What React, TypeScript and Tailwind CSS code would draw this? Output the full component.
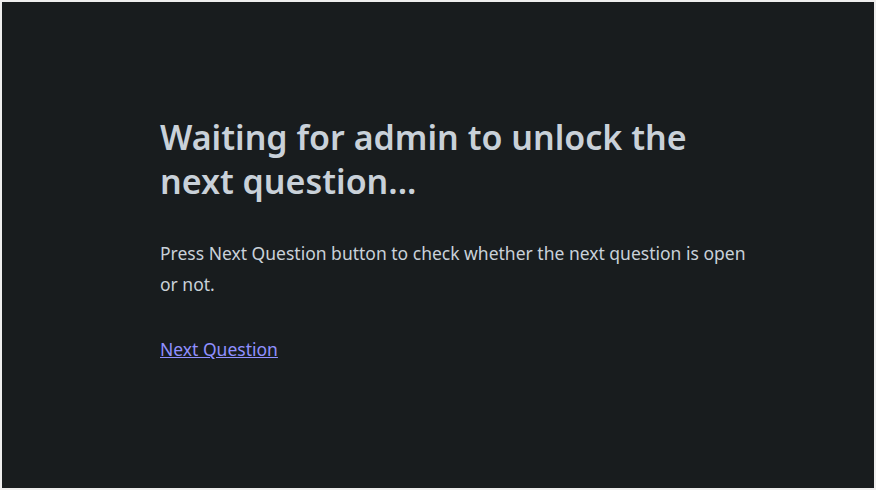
export default function App() {
  return (
    <div
      className="w-[876px] h-[490px] bg-[#181c1e] border-2 border-[#eeeeee] pl-[158px] pt-[113px]"
      style={{ fontFamily: '"Noto Sans", "Open Sans", sans-serif' }}
    >
      <div className="w-[596px]">
        <h1 className="text-[34px] leading-[44px] font-semibold text-[#c9d1d9]">
          Waiting for admin to unlock the next question...
        </h1>
        <p className="mt-[35px] text-[17.5px] leading-[31px] text-[#c9d1d9]">
          Press Next Question button to check whether the next question is open or not.
        </p>
        <a href="#" className="inline-block mt-[34px] text-[17.5px] leading-[31px] text-[#9090ff] underline">
          Next Question
        </a>
      </div>
    </div>
  );
}
